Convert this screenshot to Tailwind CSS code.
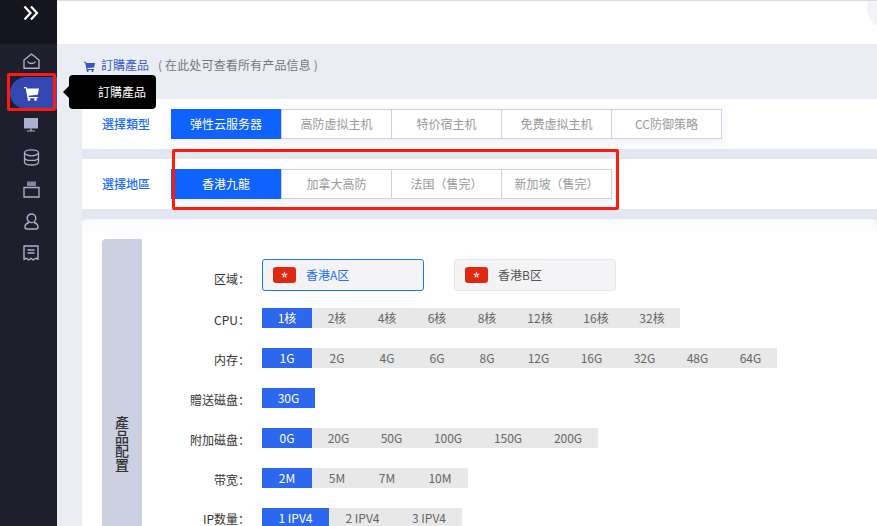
<!DOCTYPE html>
<html lang="zh">
  <head>
    <meta charset="UTF-8" />
    <script src="https://cdn.jsdelivr.net/npm/@tailwindcss/browser@4"></script>
    <title>訂購產品</title>
  </head>
  <body class="relative flex h-[526px] w-[877px] overflow-hidden bg-[#eaedf4] font-['Noto_Sans_CJK_SC','Noto_Sans',sans-serif] text-[12px]">
    <!--sidebar-->
    <aside class="h-full w-[57px] shrink-0 bg-[#1e1e2d]">
      <div class="flex h-[44px] justify-center bg-[#15151f] pt-[5px] pl-[5px]">
        <svg class="h-[16px] w-[16px]" viewBox="0 0 16 16" fill="none" stroke="#fff" stroke-width="2.2"><path d="M1.5 1.5 7.5 8l-6 6.5M8 1.5 14 8l-6 6.5" /></svg>
      </div>
      <nav class="flex flex-col pt-px text-[#aab1ce]">
        <a class="flex h-[32px] items-center justify-center pl-[5px]">
          <svg class="h-[17px] w-[17px]" viewBox="0 0 17 17" fill="none" stroke="currentColor" stroke-width="1.4"><path d="M1 7 8.500 1 16 7v8.300H1z" stroke-linejoin="round" /><path d="M4.500 8.500c1.500 2.700 6.500 2.700 8 0" /></svg>
        </a>
        <a class="ml-[10px] flex h-[32px] items-center justify-center rounded-l-[16px] border-r-2 border-[#3a50c8] bg-[#3247b0] pr-[3px]">
          <svg class="h-[15px] w-[15px]" viewBox="0 0 15 15" fill="#fff"><path d="M0 1h2.500l.6 1.600H15l-1.200 6.200-9.300.9.300 1.300h9v1.300H3.500L1.700 2.300H0z" /><circle cx="5" cy="13.500" r="1.400" /><circle cx="11.500" cy="13.500" r="1.400" /></svg>
        </a>
        <a class="flex h-[32px] items-center justify-center pl-[5px]">
          <svg class="h-[16px] w-[16px]" viewBox="0 0 16 16" fill="currentColor"><path d="M1 1h14v10.500H1z" /><path d="M7.300 11.500h1.400v2H12v1H4v-1h3.300z" /></svg>
        </a>
        <a class="flex h-[32px] items-center justify-center pl-[5px]">
          <svg class="h-[17px] w-[17px]" viewBox="0 0 17 17" fill="none" stroke="currentColor" stroke-width="1.3"><ellipse cx="8.500" cy="3.800" rx="7" ry="3" /><path d="M1.500 3.800v9.200c0 1.700 3.100 3 7 3s7-1.300 7-3V3.800M1.500 8.400c0 1.700 3.100 3 7 3s7-1.300 7-3" /></svg>
        </a>
        <a class="flex h-[32px] items-center justify-center pl-[5px]">
          <svg class="h-[17px] w-[17px]" viewBox="0 0 17 17" fill="none" stroke="currentColor" stroke-width="1.300"><path d="M1 6.500h15v9.500H1z" /><path d="M4 .5h9v4.500H4z" fill="currentColor" fill-opacity="0.7" stroke="none" /></svg>
        </a>
        <a class="flex h-[32px] items-center justify-center pl-[5px]">
          <svg class="h-[17px] w-[17px]" viewBox="0 0 17 17" fill="none" stroke="currentColor" stroke-width="1.400"><circle cx="8.500" cy="5.300" r="4.300" /><path d="M6 9.500C3.500 10.300 2 12 2 14c0 1.200.7 2 2 2h9c1.300 0 2-.8 2-2 0-2-1.500-3.700-4-4.500" /></svg>
        </a>
        <a class="flex h-[32px] items-center justify-center pl-[5px]">
          <svg class="h-[16px] w-[16px]" viewBox="0 0 16 16" fill="none" stroke="currentColor" stroke-width="1.400"><path d="M1 1h14v13.500l-2.300-1.300-2.400 1.800-2.300-1.800L5.700 15l-2.400-1.800L1 14.500z" stroke-linejoin="round" /><path d="M4.500 5h7M4.500 8h7" /></svg>
        </a>
      </nav>
    </aside>

    <main class="min-w-0 flex-1">
      <header class="relative h-[44px] overflow-hidden border-t border-[#d9d9e0] bg-white">
        <div class="absolute top-[-18px] left-[810px] h-[48px] w-[48px] rounded-full bg-[#f3f3f5]"></div>
      </header>

      <div class="pl-[25px]">
        <div class="flex h-[55px] items-start pt-[12px]">
          <svg class="mt-[5px] ml-[2px] h-[11px] w-[11px]" viewBox="0 0 15 15" fill="#3653c8"><path d="M0 1h2.500l.6 1.600H15l-1.200 6.200-9.300.9.300 1.300h9v1.300H3.500L1.700 2.300H0z" /><circle cx="5" cy="13.500" r="1.400" /><circle cx="11.500" cy="13.500" r="1.400" /></svg>
          <span class="ml-[6px] leading-[18px] text-[#3a5bc8]">訂購產品</span>
          <span class="ml-[9px] leading-[18px] tracking-[0.15px] text-[#777]">(&nbsp;在此处可查看所有产品信息&nbsp;)</span>
        </div>

        <!--type-->
        <section class="flex h-[50px] items-center bg-white pl-[20px]">
          <span class="w-[69px] font-medium text-[#1a6bff]">選擇類型</span>
          <div class="flex h-[30px] shadow-[0_4px_12px_rgba(120,130,190,0.12)]">
            <a class="flex w-[110px] items-center justify-center bg-[#0f62fe] text-white">弹性云服务器</a>
            <a class="flex w-[111px] items-center justify-center border border-[#cfd2e2] text-[#999]">高防虚拟主机</a>
            <a class="flex w-[110px] items-center justify-center border-y border-r border-[#cfd2e2] text-[#999]">特价宿主机</a>
            <a class="flex w-[110px] items-center justify-center border-y border-r border-[#cfd2e2] text-[#999]">免费虚拟主机</a>
            <a class="flex w-[110px] items-center justify-center border-y border-r border-[#cfd2e2] text-[#999]">CC防御策略</a>
          </div>
        </section>

        <div class="h-[10px] bg-[#e3e7f1]"></div>

        <!--region-->
        <section class="flex h-[50px] items-center bg-white pl-[20px]">
          <span class="w-[69px] font-medium text-[#1a6bff]">選擇地區</span>
          <div class="flex h-[30px] shadow-[0_4px_12px_rgba(120,130,190,0.12)]">
            <a class="flex w-[110px] items-center justify-center bg-[#0f62fe] text-white">香港九龍</a>
            <a class="flex w-[111px] items-center justify-center border border-[#cfd2e2] text-[#999]">加拿大高防</a>
            <a class="flex w-[110px] items-center justify-center border-y border-r border-[#cfd2e2] text-[#999]">法国（售完）</a>
            <a class="flex w-[110px] items-center justify-center border-y border-r border-[#cfd2e2] text-[#999]">新加坡（售完）</a>
          </div>
        </section>

        <div class="h-[10px] bg-[#e3e7f1]"></div>

        <!--config-->
        <section class="flex rounded-t-md bg-gradient-to-b from-[#f9fafd] to-white to-[20px] pt-[20px] pl-[20px]">
          <div class="flex h-[408px] w-[40px] shrink-0 items-center justify-center rounded-tl-[4px] bg-[#cdd0e1]">
            <span class="w-[14px] text-[14px] leading-[14px] font-medium break-all text-[#333]">產品配置</span>
          </div>
          <div class="min-w-0 flex-1 bg-white pt-[20px] text-[#666]">
            <div class="mb-[17px] flex h-[32px]">
              <span class="w-[108px] pt-[10px] text-right leading-[20px] text-[#333]">区域：</span>
              <a class="ml-[12px] flex w-[162px] items-center rounded-[3px] border border-[#1677ff] bg-[#f4f4f6] pl-[10px] text-[#1e6fff]">
                <svg class="h-[16px] w-[23px]" viewBox="0 0 23 16"><rect width="23" height="16" rx="3" fill="#de2910" /><path d="M11.500 4.200l.9 2.500 2.700.1-2.100 1.600.7 2.600-2.200-1.500-2.200 1.500.7-2.600-2.100-1.600 2.700-.1z" fill="#fbdcd6" /><circle cx="11.500" cy="8" r="1" fill="#ee8f80" /></svg>
                <span class="ml-[10px]">香港A区</span>
              </a>
              <a class="ml-[30px] flex w-[162px] items-center rounded-[3px] border border-[#e6e6ea] bg-[#f4f4f6] pl-[10px] text-[#555]">
                <svg class="h-[16px] w-[23px]" viewBox="0 0 23 16"><rect width="23" height="16" rx="3" fill="#de2910" /><path d="M11.500 4.200l.9 2.500 2.700.1-2.100 1.600.7 2.600-2.200-1.500-2.200 1.500.7-2.600-2.100-1.600 2.700-.1z" fill="#fbdcd6" /><circle cx="11.500" cy="8" r="1" fill="#ee8f80" /></svg>
                <span class="ml-[10px]">香港B区</span>
              </a>
            </div>

            <div class="mb-[20px] flex h-[20px]">
              <span class="w-[108px] pt-[2px] text-right leading-[20px] text-[#333]">CPU：</span>
              <div class="ml-[12px] flex bg-[#e8e8e8] leading-[20px]">
                <a class="w-[50px] bg-[#2d67ee] text-center text-white">1核</a>
                <a class="w-[50px] text-center">2核</a>
                <a class="w-[50px] text-center">4核</a>
                <a class="w-[50px] text-center">6核</a>
                <a class="w-[50px] text-center">8核</a>
                <a class="w-[56px] text-center">12核</a>
                <a class="w-[56px] text-center">16核</a>
                <a class="w-[56px] text-center">32核</a>
              </div>
            </div>

            <div class="mb-[20px] flex h-[20px]">
              <span class="w-[108px] pt-[2px] text-right leading-[20px] text-[#333]">内存：</span>
              <div class="ml-[12px] flex bg-[#e8e8e8] leading-[20px]">
                <a class="w-[50px] bg-[#2d67ee] text-center text-white">1G</a>
                <a class="w-[50px] text-center">2G</a>
                <a class="w-[50px] text-center">4G</a>
                <a class="w-[50px] text-center">6G</a>
                <a class="w-[50px] text-center">8G</a>
                <a class="w-[53px] text-center">12G</a>
                <a class="w-[53px] text-center">16G</a>
                <a class="w-[53px] text-center">32G</a>
                <a class="w-[53px] text-center">48G</a>
                <a class="w-[53px] text-center">64G</a>
              </div>
            </div>

            <div class="mb-[20px] flex h-[20px]">
              <span class="w-[108px] pt-[2px] text-right leading-[20px] text-[#333]">贈送磁盘：</span>
              <div class="ml-[12px] flex leading-[20px]">
                <a class="w-[53px] bg-[#2d67ee] text-center text-white">30G</a>
              </div>
            </div>

            <div class="mb-[20px] flex h-[20px]">
              <span class="w-[108px] pt-[2px] text-right leading-[20px] text-[#333]">附加磁盘：</span>
              <div class="ml-[12px] flex bg-[#e8e8e8] leading-[20px]">
                <a class="w-[50px] bg-[#2d67ee] text-center text-white">0G</a>
                <a class="w-[53px] text-center">20G</a>
                <a class="w-[53px] text-center">50G</a>
                <a class="w-[60px] text-center">100G</a>
                <a class="w-[60px] text-center">150G</a>
                <a class="w-[60px] text-center">200G</a>
              </div>
            </div>

            <div class="mb-[20px] flex h-[20px]">
              <span class="w-[108px] pt-[2px] text-right leading-[20px] text-[#333]">带宽：</span>
              <div class="ml-[12px] flex bg-[#e8e8e8] leading-[20px]">
                <a class="w-[50px] bg-[#2d67ee] text-center text-white">2M</a>
                <a class="w-[50px] text-center">5M</a>
                <a class="w-[50px] text-center">7M</a>
                <a class="w-[56px] text-center">10M</a>
              </div>
            </div>

            <div class="flex h-[18px]">
              <span class="w-[108px] pt-[4px] text-right leading-[13px] text-[#333]">IP数量：</span>
              <div class="ml-[12px] flex bg-[#e8e8e8] leading-[20px]">
                <a class="w-[67px] bg-[#2d67ee] text-center text-white">1 IPV4</a>
                <a class="w-[67px] text-center">2 IPV4</a>
                <a class="w-[66px] text-center">3 IPV4</a>
              </div>
            </div>
          </div>
        </section>
      </div>
    </main>

    <!--tooltip over the page-->
    <div class="absolute top-[75px] left-[69px] flex h-[34px] w-[87px] items-center justify-end rounded-[4px] bg-black pr-[10px] text-white">
      訂購產品
      <span class="absolute top-[11px] left-[-6px] h-0 w-0 border-y-[6px] border-r-[6px] border-y-transparent border-r-black"></span>
    </div>

    <!--red annotation boxes-->
    <div class="absolute top-[73px] left-[7px] h-[38px] w-[49px] rounded-[2px] border-[3px] border-[#ff1a10]"></div>
    <div class="absolute top-[149px] left-[172px] h-[61px] w-[447px] rounded-[2px] border-[3px] border-[#ff1a10]"></div>
  </body>
</html>
